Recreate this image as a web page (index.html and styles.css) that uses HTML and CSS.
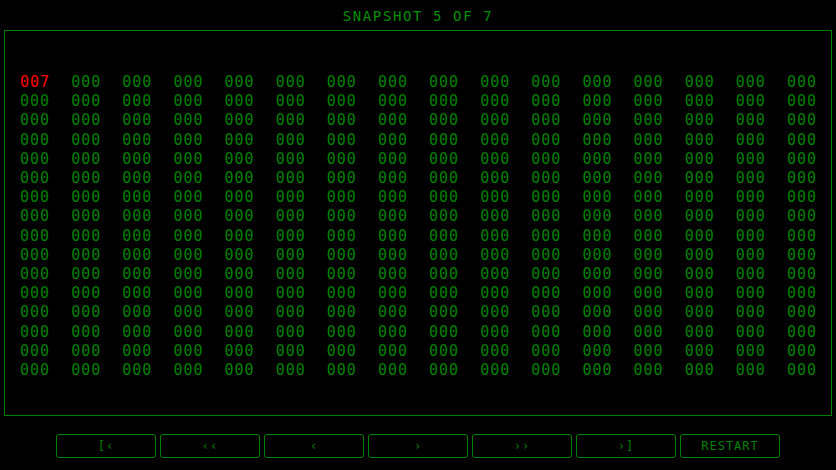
FILE: index.html
```html
<!DOCTYPE html>
<html>
<head>
<meta charset="utf-8">
<link rel="stylesheet" href="styles.css">
</head>
<body>
<div class="app">
  <h1 class="title">SNAPSHOT 5 OF 7</h1>
  <div class="board">
    <div class="grid" id="grid"></div>
  </div>
  <div class="controls">
    <button class="btn">[‹</button>
    <button class="btn">‹‹</button>
    <button class="btn">‹</button>
    <button class="btn">›</button>
    <button class="btn">››</button>
    <button class="btn">›]</button>
    <button class="btn">RESTART</button>
  </div>
</div>
<script src="app.js"></script>
</body>
</html>
```
FILE: styles.css
```css
html, body {
  margin: 0;
  padding: 0;
  background: #000;
}
body {
  font-family: "DejaVu Sans Mono", "Liberation Mono", monospace;
  color: #008000;
}
.app {
  width: 836px;
  height: 470px;
  display: flex;
  flex-direction: column;
}
.title {
  margin: 0;
  height: 30px;
  font-size: 14px;
  font-weight: normal;
  letter-spacing: 1.6px;
  line-height: 32px;
  text-align: center;
  color: #009000;
}
.board {
  margin: 0 4px;
  height: 386px;
  box-sizing: border-box;
  border: 1px solid #008000;
  padding: 42px 14px 0 15px;
}
.grid {
  display: grid;
  grid-template-columns: repeat(16, auto);
  justify-content: space-between;
  font-size: 15px;
  line-height: 19.2px;
  letter-spacing: 1px;
}
.cell.hot {
  color: #ff0000;
}
.controls {
  display: flex;
  justify-content: center;
  gap: 4px;
  padding-top: 18px;
}
.btn {
  width: 100px;
  height: 24px;
  background: #000;
  border: 1px solid #008000;
  border-radius: 3px;
  color: #008000;
  font-family: "DejaVu Sans Mono", "Liberation Mono", monospace;
  font-size: 12px;
  letter-spacing: 1px;
  padding: 0;
}
```
FILE: app.js
```js
const grid = document.getElementById('grid');
for (let r = 0; r < 16; r++) {
  for (let c = 0; c < 16; c++) {
    const s = document.createElement('span');
    s.className = 'cell' + (r === 0 && c === 0 ? ' hot' : '');
    s.textContent = (r === 0 && c === 0) ? '007' : '000';
    grid.appendChild(s);
  }
}
```
